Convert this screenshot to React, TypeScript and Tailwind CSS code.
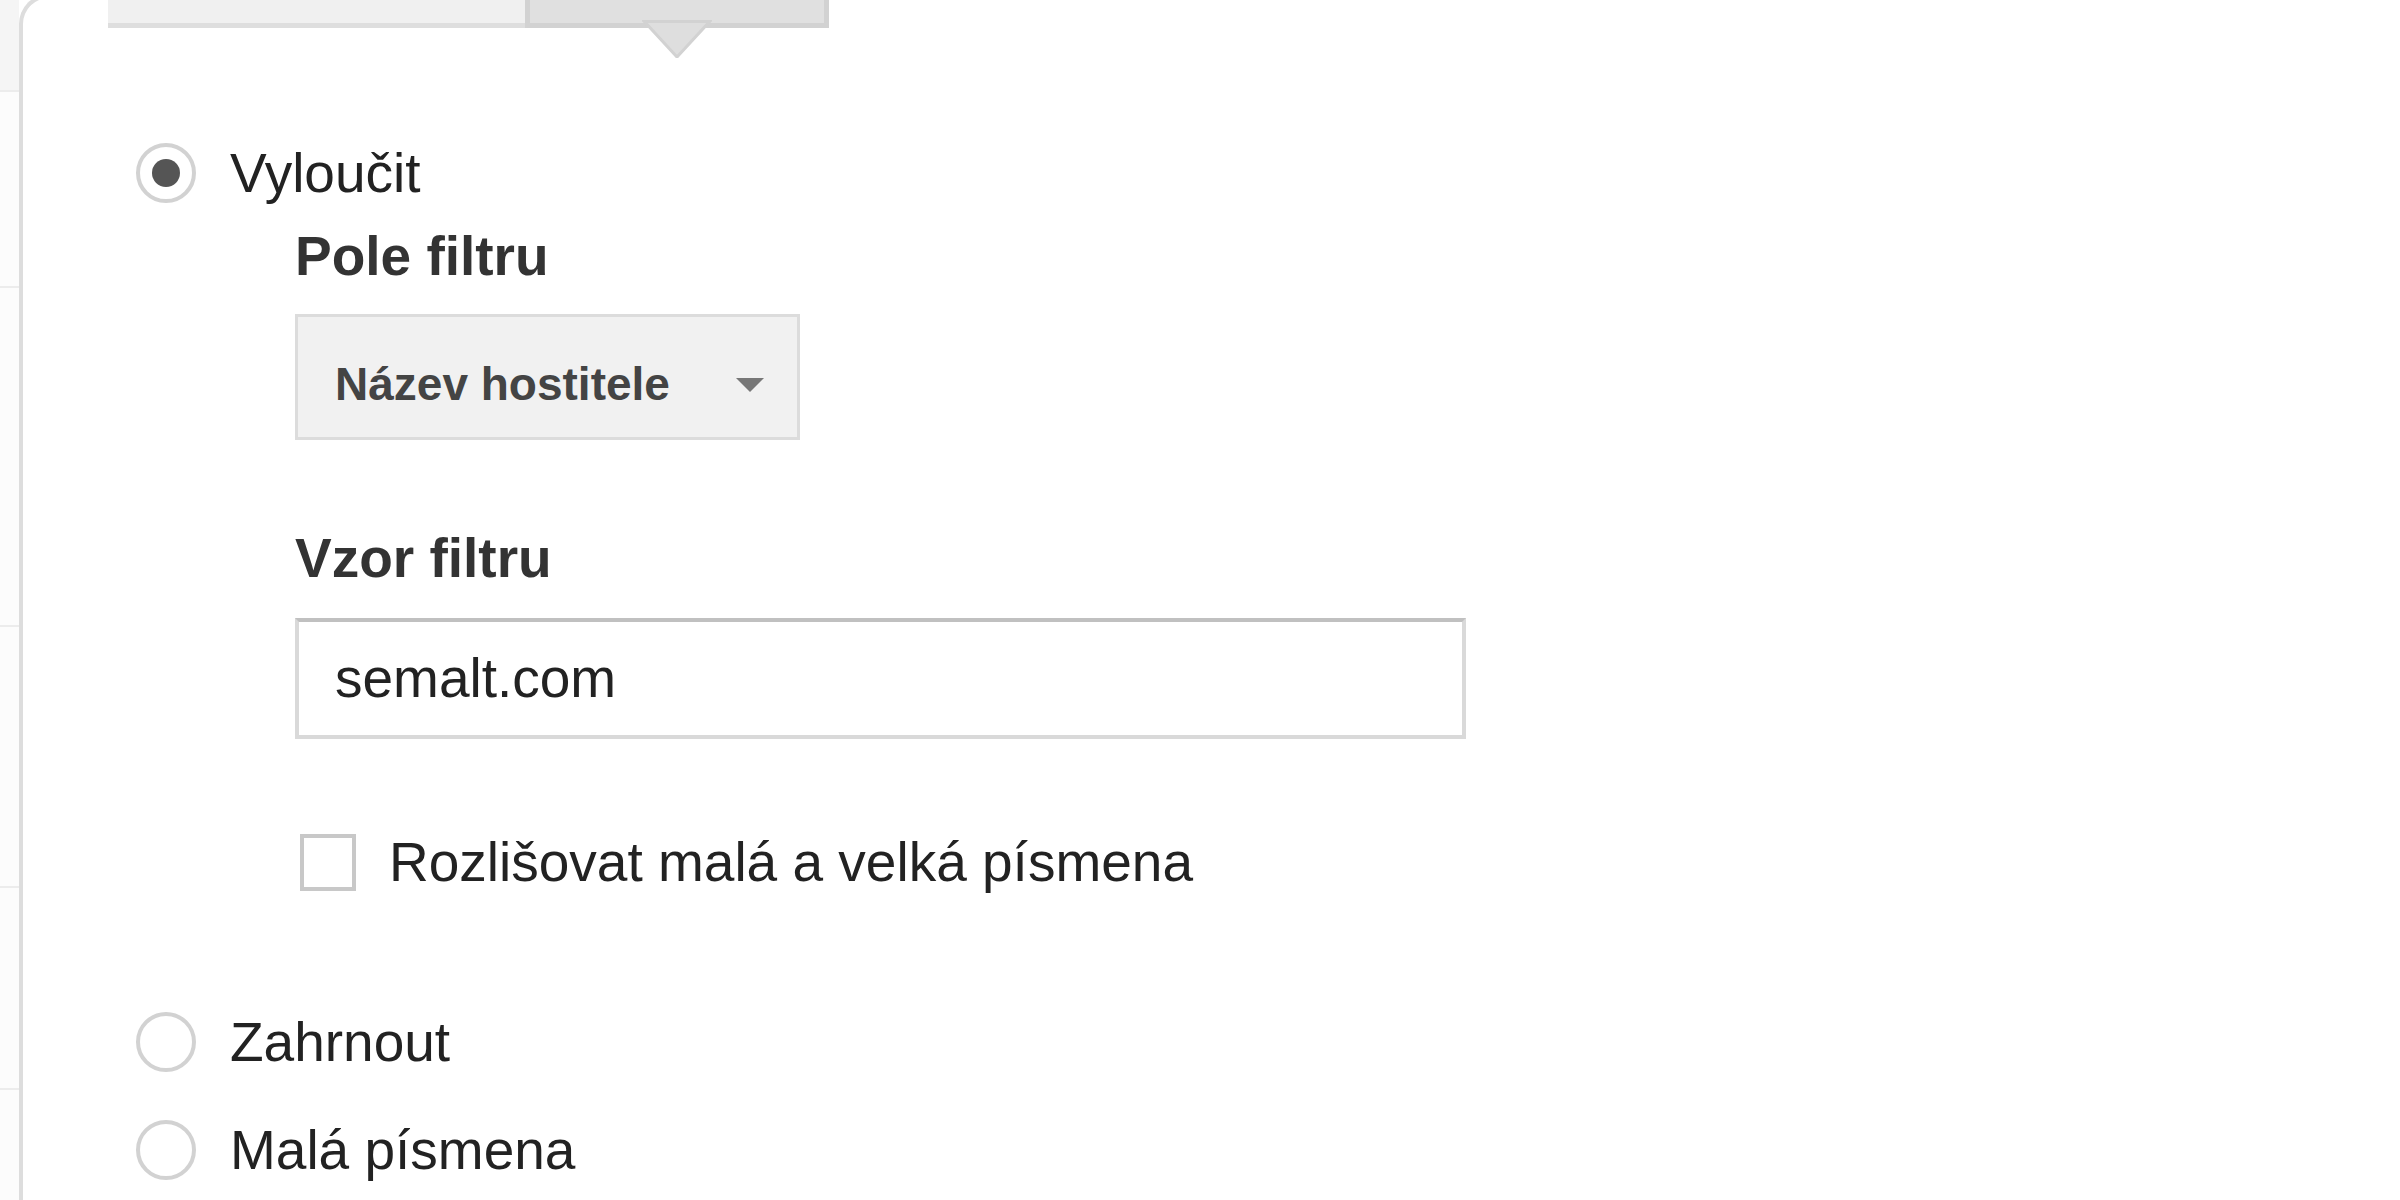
import React, { useState } from 'react'

const Radio = ({ checked, label, onClick } : { checked: boolean, label: string, onClick: () => void }) => {
  return (
    <div className='flex items-center h-[60px] cursor-pointer' onClick={onClick}>
      <span className='flex w-[60px] h-[60px] shrink-0 items-center justify-center rounded-full border-4 border-[#d2d2d2] bg-white'>
        {checked && <span className='w-[28px] h-[28px] rounded-full bg-[#555555]'></span>}
      </span>
      <span className='ml-[34px] text-[55px] leading-[60px] text-[#222222]'>{label}</span>
    </div>
  )
}

const App = () => {
  const [mode, setMode] = useState<'exclude' | 'include' | 'lower'>('exclude')
  const [caseSensitive, setCaseSensitive] = useState(false)

  return (
    <div className="w-[2400px] h-[1200px] overflow-hidden bg-white flex font-['Liberation_Sans',Arial,sans-serif]">
      {/* left strip of the page behind the panel */}
      <div className='w-[19px] shrink-0 flex flex-col'>
        <div className='h-[92px] bg-[#f5f5f5] border-b-2 border-[#ececec]'></div>
        <div className='h-[196px] bg-[#fcfcfc] border-b-2 border-[#ececec]'></div>
        <div className='h-[339px] bg-[#fcfcfc] border-b-2 border-[#ececec]'></div>
        <div className='h-[261px] bg-[#fcfcfc] border-b-2 border-[#ececec]'></div>
        <div className='h-[202px] bg-[#fcfcfc] border-b-2 border-[#ececec]'></div>
        <div className='flex-1 bg-[#fcfcfc]'></div>
      </div>

      {/* filter panel */}
      <div className='flex-1 -mt-[6px] border-l-4 border-t-4 border-[#dddddd] rounded-tl-[30px] bg-white'>
        <div className='flex ml-[85px] h-[30px]'>
          <div className='w-[417px] h-full bg-[#f0f0f0] border-b-[5px] border-[#dedede]'></div>
          <div className='relative w-[304px] h-full bg-[#e0e0e0] border-x-[5px] border-b-[5px] border-[#d2d2d2]'>
            <svg className='absolute left-1/2 -translate-x-1/2 top-full -mt-[3px]' width='70' height='38' viewBox='0 0 70 38'>
              <polygon points='1,0 69,0 35,37' fill='#dedede' stroke='#d2d2d2' strokeWidth='3' />
              <rect x='4' y='0' width='62' height='3' fill='#d2d2d2' />
            </svg>
          </div>
        </div>

        <div className='pl-[113px] mt-[115px]'>
          <Radio checked={mode == 'exclude'} label='Vyloučit' onClick={() => setMode('exclude')} />

          <div className='ml-[159px]'>
            <div className='mt-[26px] text-[55px] leading-[55px] font-bold text-[#333333]'>Pole filtru</div>

            <div className='mt-[30px] w-[505px] h-[126px] flex items-center pt-[14px] pl-[37px] pr-[33px] bg-[#f1f1f1] border-[3px] border-[#dcdcdc]'>
              <span className='flex-1 text-[46px] leading-[46px] font-bold text-[#444444]'>Název hostitele</span>
              <svg width='28' height='14' viewBox='0 0 28 14' className='mt-[2px]'>
                <polygon points='0,0 28,0 14,14' fill='#777777' />
              </svg>
            </div>

            <div className='mt-[91px] text-[55px] leading-[55px] font-bold text-[#333333]'>Vzor filtru</div>

            <div className='mt-[32px] w-[1171px] h-[121px] flex items-center pl-[36px] bg-white border-4 border-[#d9d9d9] border-t-[#c0c0c0]'>
              <span className='text-[55px] leading-[55px] text-[#222222]'>semalt.com</span>
            </div>

            <div className='mt-[95px] ml-[5px] flex items-center h-[57px] cursor-pointer' onClick={() => setCaseSensitive(!caseSensitive)}>
              <span className='w-[56px] h-[57px] shrink-0 border-4 border-[#c8c8c8] bg-white flex items-center justify-center text-[40px] text-[#555555]'>
                {caseSensitive ? '✓' : ''}
              </span>
              <span className='ml-[33px] text-[55px] leading-[57px] text-[#222222]'>Rozlišovat malá a velká písmena</span>
            </div>
          </div>

          <div className='mt-[121px]'>
            <Radio checked={mode == 'include'} label='Zahrnout' onClick={() => setMode('include')} />
          </div>
          <div className='mt-[48px]'>
            <Radio checked={mode == 'lower'} label='Malá písmena' onClick={() => setMode('lower')} />
          </div>
        </div>
      </div>
    </div>
  )
}

export default App
